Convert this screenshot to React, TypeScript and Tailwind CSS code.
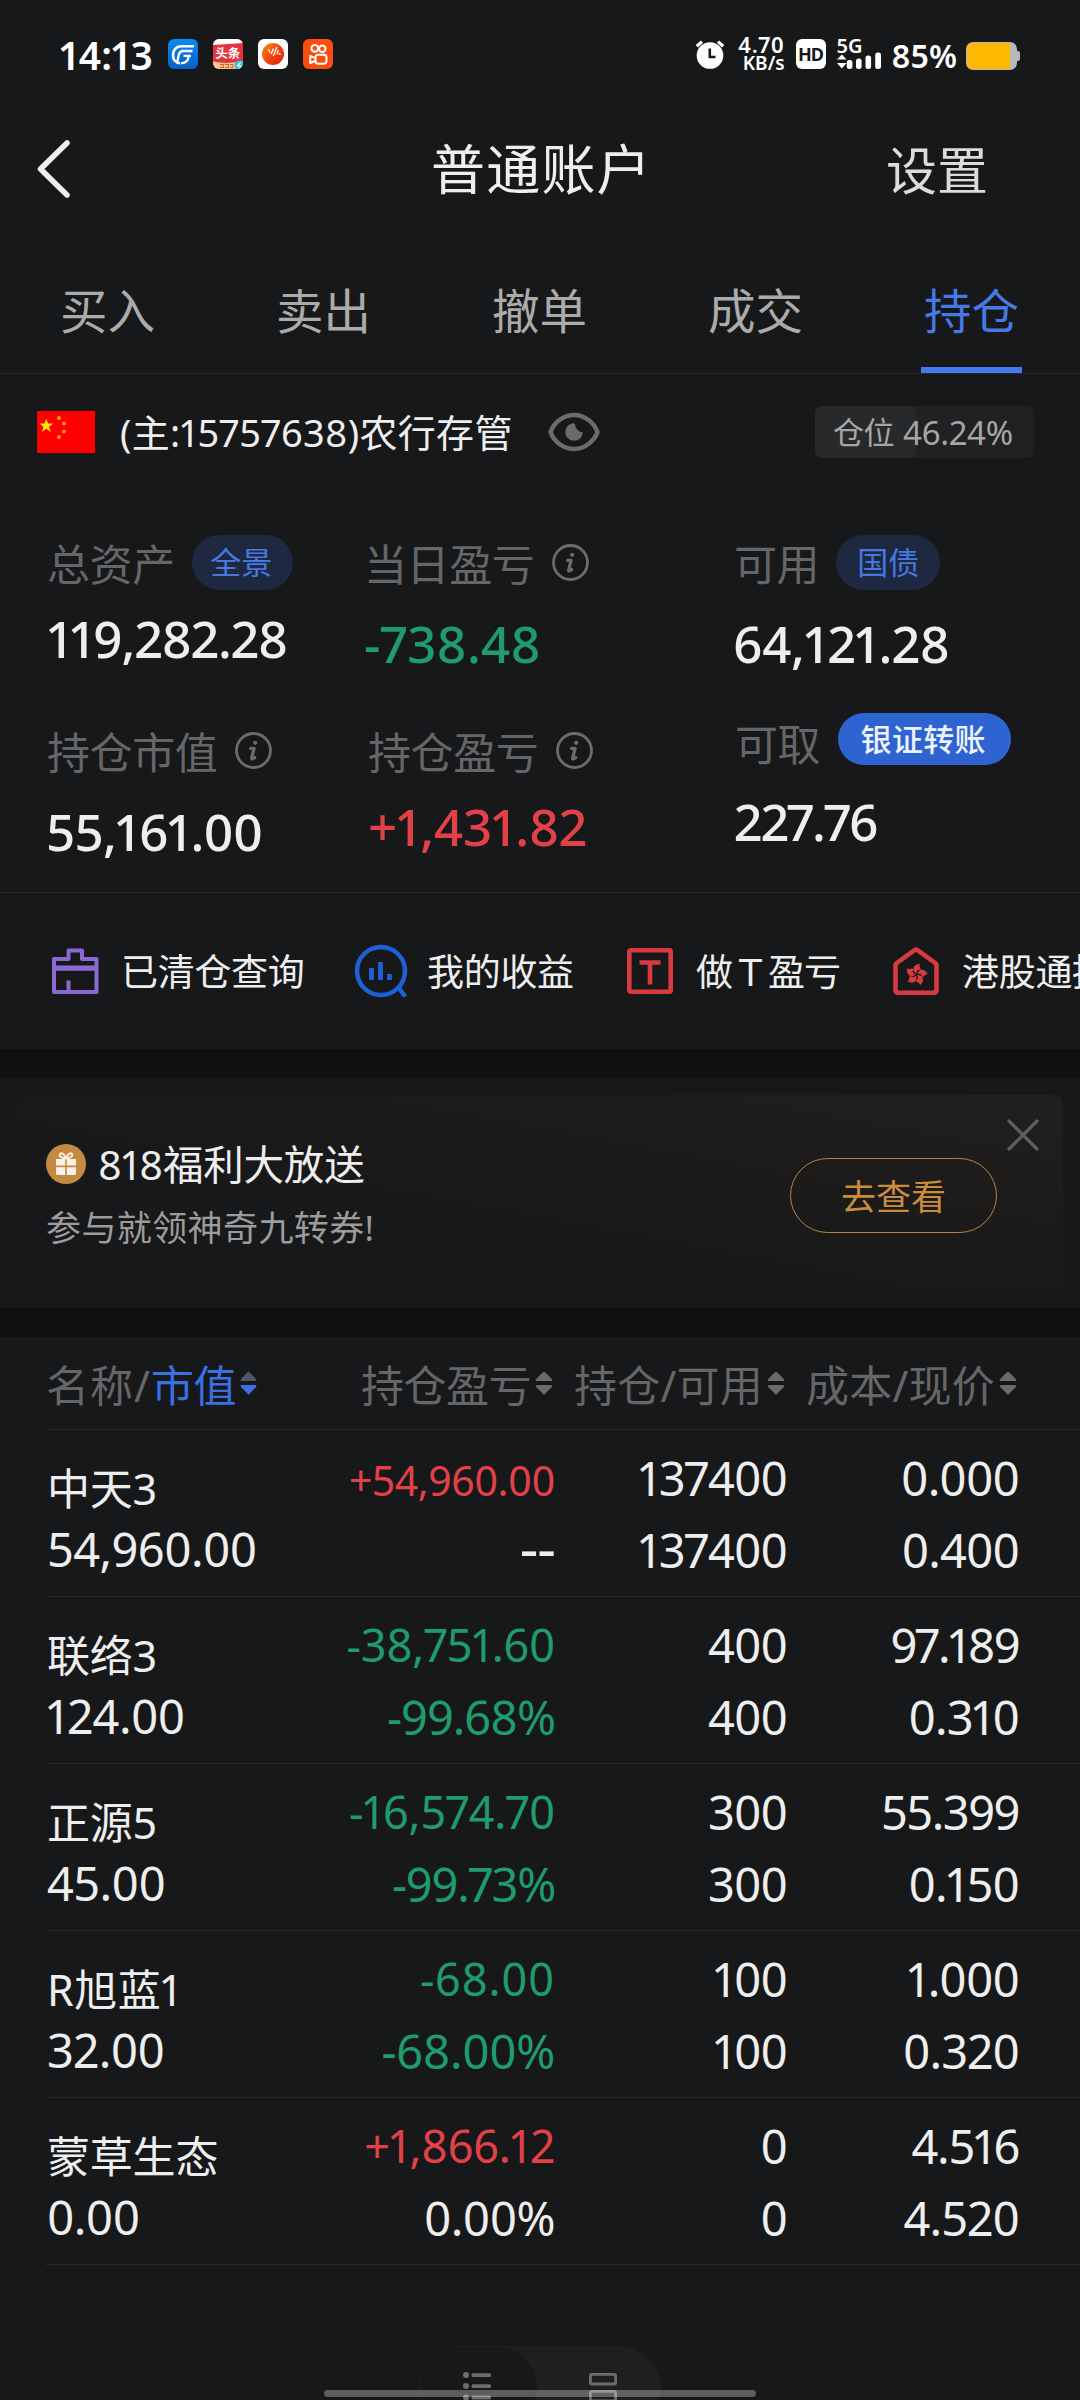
import type { ReactNode } from 'react';

function InfoIcon({ className = '' }: { className?: string }) {
  return (
    <svg className={className} width="37" height="37" viewBox="0 0 37 37" fill="none" stroke="#6a6b6d">
      <circle cx="18.5" cy="18.5" r="17" strokeWidth="2.8" />
      <circle cx="20.2" cy="10.8" r="2.1" fill="#6a6b6d" stroke="none" />
      <path d="M15.6 16.4h3.600l-2.600 9.600c-.3 1.300.9 1.300 3.200-.6" strokeWidth="3.200" strokeLinecap="round" strokeLinejoin="round" />
    </svg>
  );
}

function SortIcon({ className = '', up = '#6b6b6c', down = '#6b6b6c' }: { className?: string; up?: string; down?: string }) {
  return (
    <svg className={className} width="18" height="24" viewBox="0 0 17 24" preserveAspectRatio="none">
      <path d="M8.5.2L16.200 8.200Q17 10 15 10H2Q0 10 .8 8.200Z" fill={up} />
      <path d="M8.500 23.800L16.200 15.800Q17 14 15 14H2Q0 14 .8 15.800Z" fill={down} />
    </svg>
  );
}

function StatusBar() {
  return (
    <div className="flex h-[108px] items-center pl-[60px] pr-[60px] text-white">
      <span className="text-[39px] font-semibold leading-none tracking-[-0.200px]">14:13</span>
      <div className="ml-[15px] flex gap-[15px]">
        <svg width="30" height="30" viewBox="0 0 30 30">
          <defs>
            <linearGradient id="appBlue" x1="0" y1="0" x2="0" y2="1">
              <stop offset="0" stopColor="#0a8cf5" />
              <stop offset="1" stopColor="#0a5fc6" />
            </linearGradient>
          </defs>
          <rect width="30" height="30" rx="6" fill="url(#appBlue)" />
          <g fill="none" stroke="#fff" strokeLinecap="butt">
            <path d="M26 7.200H13.500C8 7.200 5 11.500 5 16c0 4.500 2.800 8 7 8.300" strokeWidth="2.600" />
            <path d="M24.500 12H15.500c-3 0-4.500 2-5 5l-1.200 6" strokeWidth="2.300" />
            <path d="M23 16.800h-7.500M20.500 17c0 4.500-2.500 7-7.500 7.300" strokeWidth="2.300" />
          </g>
        </svg>
        <div className="relative h-[30px] w-[30px] overflow-hidden rounded-[6px] bg-[#e6343f]">
          <svg width="30" height="30" viewBox="0 0 30 30">
            <path d="M0 0H30V4L0 6Z" fill="#fff" />
            <path d="M0 22.500Q12 25.500 30 22V30H0Z" fill="#f7c98c" />
            <circle cx="26.500" cy="26.500" r="5" fill="#2fc3dc" />
            <path d="M7 25.500h3.500v3H7M12 25.500h3.500v3H12M17 25.500h3v3h-3" stroke="#e2552f" strokeWidth="1" fill="none" />
            <path d="M27.500 23.500l-3 3.500h3.500l-2 3" stroke="#fff" strokeWidth="1.200" fill="none" />
          </svg>
          <span className="absolute left-[2.500px] top-[8px] text-[12.500px] font-bold leading-[13px]">头条</span>
        </div>
        <svg width="30" height="30" viewBox="0 0 30 30">
          <defs>
            <linearGradient id="appOrange" x1="0" y1="0" x2="1" y2="1">
              <stop offset="0" stopColor="#f78a12" />
              <stop offset="0.600" stopColor="#ee3f10" />
              <stop offset="1" stopColor="#d8200a" />
            </linearGradient>
          </defs>
          <rect width="30" height="30" rx="6" fill="#fff" />
          <circle cx="15" cy="15" r="11" fill="url(#appOrange)" />
          <path d="M10.500 10.500l1.200 2.500M13.300 14.500l2-4.500M15.500 16.500l3.200-8M19 15l1.200-3.500M21.500 14.500l.6.800" stroke="#fff" strokeWidth="1.300" strokeLinecap="round" fill="none" />
        </svg>
        <svg width="30" height="30" viewBox="0 0 30 30" fill="none" stroke="#fff" strokeWidth="2">
          <rect width="30" height="30" rx="6" fill="#fb4d0f" stroke="none" />
          <circle cx="11.800" cy="9.300" r="3.400" />
          <circle cx="19.300" cy="9.800" r="3.200" />
          <rect x="12.500" y="15.800" width="11" height="9" rx="2.800" />
          <path d="M12 18.800L7.200 16.800V24L12 22" strokeLinejoin="round" />
        </svg>
      </div>
      <svg className="ml-auto" width="30" height="30" viewBox="0 0 30 30">
        <circle cx="15" cy="16.500" r="13.300" fill="#fff" />
        <path d="M1.800 7.200L7 2.600M28.200 7.200L23 2.600" stroke="#fff" strokeWidth="3.200" />
        <path d="M14.800 9.500V18H20.500" stroke="#17181a" strokeWidth="2.600" fill="none" />
      </svg>
      <div className="ml-[12px] w-[48px] text-right font-semibold">
        <div className="h-[19px] text-[22px] leading-[19px] tracking-[0.700px]">4.70</div>
        <div className="h-[19px] text-[19px] leading-[19px]">KB/s</div>
      </div>
      <div className="ml-[11px] flex h-[30px] w-[30px] items-center justify-center rounded-[6px] bg-white text-[18px] font-bold leading-none tracking-[-1px] text-[#17181a]">HD</div>
      <div className="relative ml-[11px] h-[30px] w-[46px]">
        <span className="block text-[20px] font-semibold leading-[14px]">5G</span>
        <svg className="absolute bottom-0 left-0" width="46" height="18" viewBox="0 0 46 18" fill="#fff">
          <path d="M0 8.500L4.800 3.500L9.600 8.500ZM0 12H9.600L4.800 17.500Z" />
          <rect x="9.800" y="9" width="5.600" height="9" rx="2.500" />
          <rect x="19" y="7.500" width="5.600" height="10.500" rx="2.500" />
          <rect x="28.500" y="4.500" width="5.600" height="13.500" rx="2.500" />
          <rect x="38.200" y="1.500" width="5.800" height="16.500" rx="2.500" />
        </svg>
      </div>
      <span className="ml-[9px] mt-[3px] text-[32px] font-semibold leading-none">85%</span>
      <svg className="ml-[9px] mt-[3px]" width="54" height="28" viewBox="0 0 54 28">
        <rect width="51" height="28" rx="7" fill="#b9b9b9" />
        <rect x="49" y="9" width="5" height="10" rx="2" fill="#b9b9b9" />
        <path d="M7 1H44V27H7Q1 27 1 21V7Q1 1 7 1Z" fill="#ffb800" />
      </svg>
    </div>
  );
}

function TitleBar() {
  return (
    <div className="relative flex h-[122px] items-center justify-between pl-[37px] pr-[92px]">
      <svg width="34" height="60" viewBox="0 0 34 60" fill="none" stroke="#eeeeee" strokeWidth="5.500" strokeLinecap="round" strokeLinejoin="round">
        <path d="M30 4L3.500 30L30 56" />
      </svg>
      <h1 className="absolute left-[431px] text-[54px] leading-none tracking-[1.200px] text-[#eeeeee]">普通账户</h1>
      <span className="mt-[3px] text-[51px] leading-none text-[#dcdcdc]">设置</span>
    </div>
  );
}

const tabs = ['买入', '卖出', '撤单', '成交', '持仓'];

function Tabs() {
  return (
    <nav className="grid h-[144px] grid-cols-5 border-b border-[#27282a]">
      {tabs.map((tab) => {
        const active = tab === '持仓';
        return (
          <div key={tab} className={`relative flex justify-center pt-[57px] pr-[1px] text-[47.500px] leading-[48px] ${active ? 'text-[#4678e8]' : 'text-[#ababab]'}`}>
            {tab}
            {active && <span className="absolute bottom-0 h-[6px] w-[101px] bg-[#4678f0]" />}
          </div>
        );
      })}
    </nav>
  );
}

function AccountRow() {
  return (
    <div className="flex h-[115px] items-center pl-[37px] pr-[46px]">
      <svg width="58" height="42" viewBox="0 0 58 42">
        <rect width="58" height="42" fill="#fe0000" />
        <path d="M9.300 7.500l1.800 5h5.200l-4.200 3.200 1.600 5.300-4.400-3.200-4.400 3.200 1.600-5.300-4.200-3.200h5.200z" fill="#ffe800" />
        <g fill="#fba400">
          <circle cx="22" cy="7" r="2" />
          <circle cx="27" cy="12.500" r="2" />
          <circle cx="27" cy="20.500" r="2" />
          <circle cx="22" cy="26" r="2" />
        </g>
      </svg>
      <span className="ml-[25px] whitespace-nowrap text-[38px] leading-none tracking-[0.300px] text-[#eeeeee]">(主:15757638)农行存管</span>
      <svg className="ml-[35px]" width="52" height="40" viewBox="0 0 52 40">
        <path d="M2.500 20C6 10 16 3 26 3s20 7 23.500 17C46 30 36 37 26 37S6 30 2.500 20Z" fill="none" stroke="#6a6b6d" strokeWidth="4.500" strokeLinejoin="round" />
        <path d="M26.500 11.200A8.800 8.800 0 1 0 34.800 20.200Q28.500 20.200 26.500 11.200Z" fill="#6a6b6d" />
      </svg>
      <div className="relative ml-auto flex h-[52px] w-[219px] items-center overflow-hidden rounded-[6px] bg-[#202123] pl-[18px]">
        <span className="absolute left-0 h-full w-[101px] rounded-[6px] bg-[#28292b]" />
        <span className="relative mt-[2px] text-[31px] leading-none tracking-[-0.500px] text-[#a6a6a7]">仓位</span>
        <span className="relative ml-[9px] mt-[1px] text-[33px] leading-none tracking-[-0.200px] text-[#a6a6a7]">46.24%</span>
      </div>
    </div>
  );
}

type StatProps = { label: string; labelClass?: string; extra: ReactNode; value: string; valueClass: string; className?: string };

function Stat({ label, labelClass = 'mt-[4px]', extra, value, valueClass, className = '' }: StatProps) {
  return (
    <div className={className}>
      <div className="flex h-[55px] items-center">
        <span className={`text-[43px] leading-none tracking-[-0.400px] text-[#656668] ${labelClass}`}>{label}</span>
        {extra}
      </div>
      <div className={`text-[51px] font-medium leading-[60px] ${valueClass}`}>{value}</div>
    </div>
  );
}

function Pill({ children, className }: { children: ReactNode; className: string }) {
  return <span className={`flex items-center justify-center rounded-full text-[31px] leading-none ${className}`}>{children}</span>;
}

function Stats() {
  return (
    <section className="grid h-[404px] grid-cols-[319px_368px_1fr] grid-rows-[176px_1fr] border-b border-[#27282a] pl-[47px] pt-[46px]">
      <Stat
        label="总资产"
        extra={<Pill className="ml-[17px] h-[55px] w-[101px] bg-[#1e2840] pr-[2px] text-[#4678e0]">全景</Pill>}
        value="119,282.28"
        valueClass="mt-[18px] ml-[1px] tracking-[-1.100px] text-[#eeeeee]"
      />
      <Stat label="当日盈亏" labelClass="mt-[4px] ml-[-2px]" extra={<InfoIcon className="ml-[18px]" />} value="-738.48" valueClass="mt-[23px] ml-[-2px] tracking-[0.200px] text-[#1f9c6e]" />
      <Stat
        label="可用"
        extra={<Pill className="ml-[17px] h-[55px] w-[104px] bg-[#1e2840] text-[#4678e0]">国债</Pill>}
        value="64,121.28"
        valueClass="mt-[23px] ml-[-1px] tracking-[-0.500px] text-[#eeeeee]"
      />
      <Stat className="pt-[12px]" label="持仓市值" extra={<InfoIcon className="ml-[18px]" />} value="55,161.00" valueClass="mt-[23px] ml-[-1px] tracking-[-0.800px] text-[#eeeeee]" />
      <Stat className="pl-[2px] pt-[12px]" label="持仓盈亏" extra={<InfoIcon className="ml-[18px]" />} value="+1,431.82" valueClass="mt-[18px] tracking-[-0.250px] text-[#e24247]" />
      <Stat
        className="pl-[1px]"
        label="可取"
        labelClass="mt-[11px]"
        extra={<Pill className="ml-[18px] h-[52px] w-[173px] bg-[#2e64d2] pr-[3px] pt-[1px] font-medium tracking-[0.300px] text-[#eef2fb]">银证转账</Pill>}
        value="227.76"
        valueClass="mt-[25px] ml-[-1px] tracking-[-1.700px] text-[#eeeeee]"
      />
    </section>
  );
}

function Shortcuts() {
  return (
    <section className="flex h-[156px] items-center overflow-hidden whitespace-nowrap pl-[51px] text-[37px] leading-none tracking-[-0.300px] text-[#eeeeee]">
      <div className="flex w-[303px] shrink-0 items-center">
        <svg width="48" height="48" viewBox="0 0 48 48" fill="none" stroke="#8b69d2" strokeWidth="4" strokeLinejoin="round">
          <path d="M3 45V12H17.500V3.500H31V12H45.500V45ZM3 21.500H45.500M17.500 45V33.500" />
          <path d="M3 21H45.500" strokeWidth="5" />
        </svg>
        <span className="ml-[22px] mt-[1px]">已清仓查询</span>
      </div>
      <div className="flex w-[272px] shrink-0 items-center">
        <svg width="54" height="54" viewBox="0 0 54 54" fill="none" stroke="#1f60d8">
          <circle cx="27" cy="27" r="24" strokeWidth="4.500" />
          <path d="M45 44L50 51" strokeWidth="4.500" strokeLinecap="round" />
          <path d="M17.500 24V36M26.500 18V36M35.500 30V36" strokeWidth="4.800" />
        </svg>
        <span className="ml-[19px] mt-[1px]">我的收益</span>
      </div>
      <div className="flex w-[266px] shrink-0 items-center">
        <svg width="48" height="48" viewBox="0 0 48 48" fill="none" stroke="#d93a40">
          <rect x="3.300" y="3.300" width="41.400" height="41.400" rx="1.500" strokeWidth="4.600" />
          <path d="M13.500 15.500H34.500M24 15V37.500" strokeWidth="4.600" />
        </svg>
        <span className="ml-[22px] mt-[1px] tracking-[-1px]">做Ｔ盈亏</span>
      </div>
      <div className="flex shrink-0 items-center">
        <svg width="48" height="50" viewBox="0 0 48 50" fill="none" stroke="#d93a40">
          <path d="M3.500 19.500Q3.500 18 4.800 17L22.500 4.200Q24 3.200 25.500 4.200L43.200 17Q44.500 18 44.500 19.500V43.500Q44.500 46.700 41.300 46.700H6.700Q3.500 46.700 3.500 43.500Z" strokeWidth="4.600" />
          <g fill="#d93a40" stroke="none" transform="translate(24.500 28.500)">
            {[10, 82, 154, 226, 298].map((a) => (
              <path key={a} transform={`rotate(${a})`} d="M-.3-.8C-5.500-3-5.500-9.500 1.500-11.200C.2-8.500 4.200-7.500 3.200-3.800C2.200-6.200-.8-5-.3-.8Z" />
            ))}
          </g>
        </svg>
        <span className="ml-[22px] mt-[1px]">港股通持仓</span>
      </div>
    </section>
  );
}

function Banner() {
  return (
    <section className="h-[230px] pl-[17px] pr-[17px] pt-[17px]">
      <div className="relative flex h-[195px] rounded-[10px] bg-linear-to-tr from-[#17181a] from-35% via-[#1c1b1a] via-65% to-[#22201e] pl-[29px] pr-[66px]">
        <div className="pt-[48px]">
          <div className="flex h-[44px] items-center">
            <svg className="mt-[-3px]" width="40" height="40" viewBox="0 0 40 40">
              <circle cx="20" cy="20" r="20" fill="#c58a42" />
              <path fill="#fbf1e4" d="M10 15h9.200v6.500H10zM20.800 15H30v6.500h-9.200zM10 23.200h9.200V31H11.500Q10 31 10 29.500zM20.800 23.200H30v6.300Q30 31 28.500 31h-7.700z" />
              <path d="M20 14.500C15 14 12.800 12 14 10C15.500 8 19 10.500 20 14.500C21 10.500 24.500 8 26 10C27.200 12 25 14 20 14.500Z" fill="none" stroke="#fbf1e4" strokeWidth="1.800" />
            </svg>
            <span className="ml-[12px] text-[40.500px] leading-none tracking-[-0.200px] text-[#eeeeee]">818福利大放送</span>
          </div>
          <div className="mt-[19px] text-[35px] leading-[44px] tracking-[0.400px] text-[#9c9c9d]">参与就领神奇九转券!</div>
        </div>
        <div className="ml-auto mt-[63px] flex h-[75px] w-[207px] items-center justify-center rounded-full border border-[#b98443] pt-[1px] text-[35px] leading-none text-[#cb8c40]">去查看</div>
        <svg className="absolute right-[24px] top-[24px]" width="32" height="32" viewBox="0 0 32 32" stroke="#5e5e5e" strokeWidth="3.200" strokeLinecap="round">
          <path d="M2 2L30 30M30 2L2 30" />
        </svg>
      </div>
    </section>
  );
}

type Row = {
  name: string;
  nameClass?: string;
  value: string;
  pnl: string;
  pnlClass: string;
  rate: string;
  rateClass: string;
  held: string;
  free: string;
  cost: string;
  price: string;
  costClass?: string;
};

const GREEN = 'text-[#1f9c6e]';
const RED = 'text-[#e24247]';

const rows: Row[] = [
  { name: '中天3', value: '54,960.00', pnl: '+54,960.00', pnlClass: `${RED} pt-[2px] text-[41px] tracking-[-0.500px]`, rate: '--', rateClass: 'mt-[9px] text-[58px] tracking-[-1px]', held: '137400', free: '137400', cost: '0.000', price: '0.400' },
  { name: '联络3', value: '124.00', pnl: '-38,751.60', pnlClass: `${GREEN} text-[45px] tracking-[-0.300px]`, rate: '-99.68%', rateClass: `${GREEN} mt-[12px] tracking-[-1px]`, held: '400', free: '400', cost: '97.189', price: '0.310', costClass: 'tracking-[-1.700px]' },
  { name: '正源5', value: '45.00', pnl: '-16,574.70', pnlClass: `${GREEN} text-[45px] tracking-[-0.200px]`, rate: '-99.73%', rateClass: `${GREEN} mt-[12px] tracking-[-1.200px]`, held: '300', free: '300', cost: '55.399', price: '0.150', costClass: 'tracking-[-1.500px]' },
  { name: 'R旭蓝1', nameClass: 'tracking-[0.500px]', value: '32.00', pnl: '-68.00', pnlClass: `${GREEN} text-[45px] tracking-[0.600px]`, rate: '-68.00%', rateClass: `${GREEN} mt-[12px] tracking-[-0.400px]`, held: '100', free: '100', cost: '1.000', price: '0.320', costClass: 'tracking-[-0.900px]' },
  { name: '蒙草生态', value: '0.00', pnl: '+1,866.12', pnlClass: `${RED} text-[45px] tracking-[-0.200px]`, rate: '0.00%', rateClass: 'mt-[12px] tracking-[-0.600px]', held: '0', free: '0', cost: '4.516', price: '4.520', costClass: 'tracking-[-1.300px]' },
];

const columns = ['持仓盈亏', '持仓/可用', '成本/现价'];

function Holdings() {
  return (
    <section>
      <div className="grid h-[92px] grid-cols-[211px_300px_232px_232px] items-center pl-[46px] pt-[4px] text-[43px] leading-none text-[#656668]">
        <div className="flex items-center whitespace-nowrap">
          <span className="tracking-[1px]">名称/</span>
          <span className="tracking-[-0.500px] text-[#3a70e4]">市值</span>
          <SortIcon className="ml-[4px] mt-[-5px]" up="#4d5568" down="#3a70e4" />
        </div>
        {columns.map((c) => (
          <div key={c} className="flex items-center justify-end whitespace-nowrap pr-[4px]">
            <span className={c === '持仓盈亏' ? 'tracking-[-0.500px]' : 'tracking-[0.200px]'}>{c}</span>
            <SortIcon className="ml-[4px] mt-[-5px]" />
          </div>
        ))}
      </div>
      <div className="ml-[46px] border-b border-[#27282a]">
        {rows.map((r) => (
          <div key={r.name} className="grid h-[167px] grid-cols-[210px_299px_232px_232px] whitespace-nowrap border-t border-[#27282a] text-[47px] leading-[60px] tracking-[-0.900px] text-[#eeeeee]">
            <div className="pl-[1px] pt-[29px]">
              <div className={`h-[60px] text-[43px] ${r.nameClass ?? 'tracking-[-0.200px]'}`}>{r.name}</div>
              <div className="tracking-[-0.600px]">{r.value}</div>
            </div>
            <div className="pt-[18px] text-right">
              <div className={`h-[60px] leading-[60px] ${r.pnlClass}`}>{r.pnl}</div>
              <div className={`leading-[60px] ${r.rateClass}`}>{r.rate}</div>
            </div>
            <div className="pt-[18px] text-right">
              <div>{r.held}</div>
              <div className="mt-[12px]">{r.free}</div>
            </div>
            <div className="pt-[18px] text-right">
              <div className={r.costClass}>{r.cost}</div>
              <div className="mt-[12px]">{r.price}</div>
            </div>
          </div>
        ))}
      </div>
    </section>
  );
}

function ViewToggle() {
  return (
    <div className="relative h-[135px] overflow-hidden pt-[81px]">
      <div className="mx-auto flex h-[84px] w-[242px] rounded-[42px] border border-[#1f2022] bg-[#1e1f21]">
        <div className="flex w-[117px] justify-center rounded-[42px] bg-[#17181a] pr-[4px] pt-[23px]">
          <svg width="30" height="32" viewBox="0 0 30 32" fill="#6c6d6f">
            <circle cx="4" cy="5" r="3" />
            <circle cx="4" cy="16" r="3" />
            <circle cx="4" cy="27.500" r="3" />
            <rect x="9.500" y="3.200" width="19.500" height="3.800" rx="1.500" />
            <rect x="9.500" y="14.200" width="19.500" height="3.800" rx="1.500" />
            <rect x="9.500" y="25.600" width="19.500" height="3.800" rx="1.500" />
          </svg>
        </div>
        <div className="flex flex-1 justify-center pl-[8px] pt-[24px]">
          <svg width="30" height="34" viewBox="0 0 30 34" fill="none" stroke="#6c6d6f" strokeWidth="2.800">
            <rect x="2.400" y="3.400" width="25.200" height="9.600" rx="1.500" />
            <rect x="2.400" y="20.400" width="25.200" height="9.600" rx="1.500" />
          </svg>
        </div>
      </div>
      <div className="absolute bottom-[3px] left-[324px] h-[7px] w-[432px] rounded-full bg-white/30" />
    </div>
  );
}

export default function App() {
  return (
    <main className='h-[2400px] w-[1080px] overflow-hidden bg-[#17181a] font-["Noto_Sans","Noto_Sans_CJK_SC",sans-serif] proportional-nums'>
      <StatusBar />
      <TitleBar />
      <Tabs />
      <AccountRow />
      <Stats />
      <Shortcuts />
      <div className="h-[29px] bg-[#0f1012]" />
      <Banner />
      <div className="h-[29px] bg-[#0f1012]" />
      <Holdings />
      <ViewToggle />
    </main>
  );
}
